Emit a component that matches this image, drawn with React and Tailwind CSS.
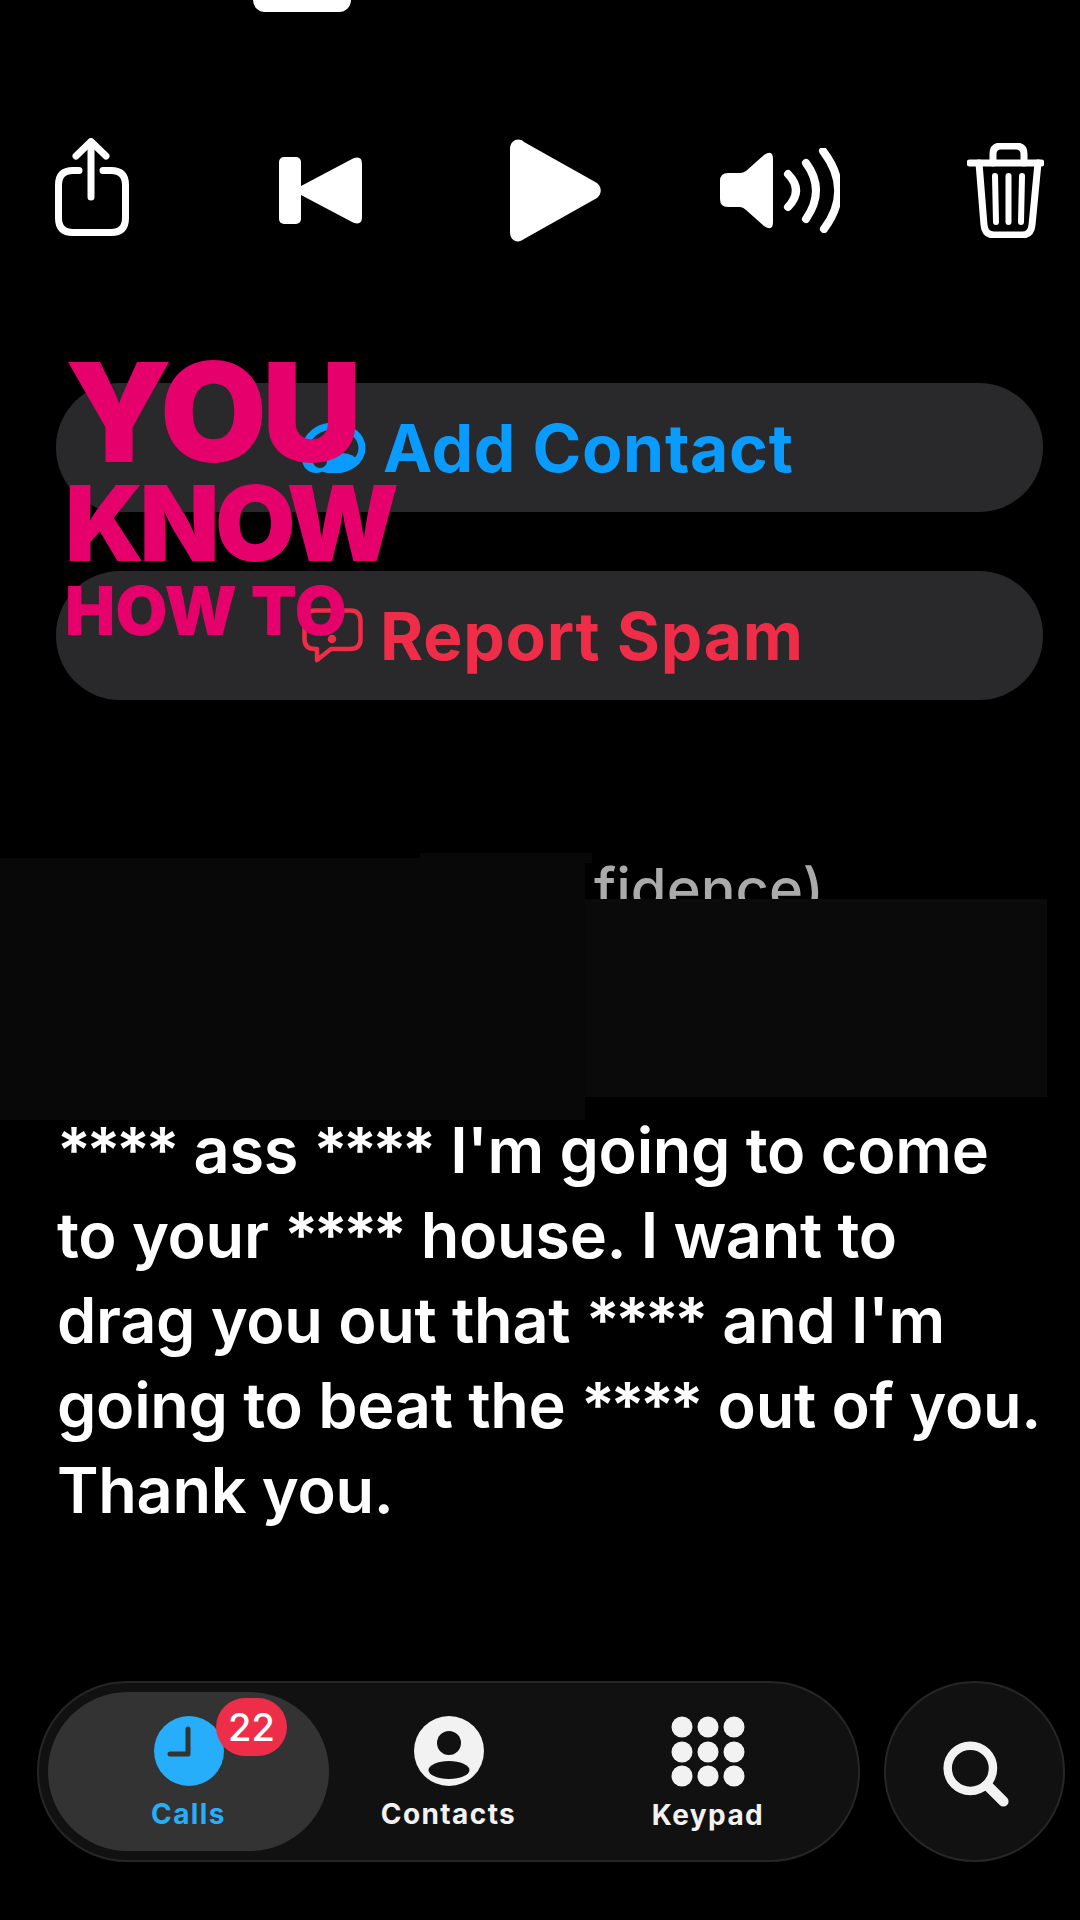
import React from "react";

const sans = "font-['Inter','Liberation_Sans',sans-serif]";

function Share() {
  return (
    <svg width="74" height="98" viewBox="0 0 74 98" fill="none" stroke="#fff" strokeWidth="7" strokeLinecap="round" strokeLinejoin="round" className="self-start">
      <path d="M24 32.5 H18 Q3.5 32.5 3.5 47 V80 Q3.5 94.5 18 94.5 H56 Q70.5 94.5 70.5 80 V47 Q70.5 32.5 56 32.5 H48" />
      <path d="M36 4 V59" />
      <path d="M21 18 L36 3.5 L51 18" />
    </svg>
  );
}

function Back() {
  return (
    <svg width="83" height="67" viewBox="0 0 83 67" fill="#fff">
      <rect x="0" y="0" width="22" height="67" rx="5" />
      <path d="M22 29 L74 1.5 Q83 -2 83 7 V60 Q83 69 74 65.5 L22 38 Z" />
    </svg>
  );
}

function Play() {
  return (
    <svg width="91" height="103" viewBox="0 0 91 103" fill="#fff">
      <path d="M0 10 C0 1 9 -2 14 3 L87 44 C92 48 92 55 87 59 L14 100 C8 105 0 102 0 93 Z" />
    </svg>
  );
}

function Speaker() {
  return (
    <svg width="120" height="85" viewBox="0 0 120 85" fill="none">
      <path fill="#fff" d="M8 25 H20 Q23 25 26 23 L44 7 Q53 1 53 11 V74 Q53 84 44 78 L26 62 Q23 59 20 59 H8 Q0 59 0 51 V33 Q0 25 8 25 Z" />
      <g stroke="#fff" strokeWidth="8" strokeLinecap="round">
        <path d="M68 26 Q84 42.5 68 59" />
        <path d="M86 15 Q106 42 86 71" />
        <path d="M103 3 Q133 42 104 81" />
      </g>
    </svg>
  );
}

function Trash() {
  return (
    <svg width="77" height="95" viewBox="0 0 77 95" fill="none" stroke="#fff" strokeWidth="7" strokeLinecap="round" strokeLinejoin="round">
      <path d="M3 20 H74" />
      <path d="M26 20 V11 Q26 3 34 3 H49 Q57 3 57 11 V20" />
      <path d="M12 20 L17 82 Q18 92 27 92 H55 Q64 92 65 82 L71 20" />
      <path d="M28 33 L29 79 M41.5 33 V79 M55 33 L54 79" strokeWidth="6" />
    </svg>
  );
}

function AddIcon() {
  return (
    <svg width="64" height="50" viewBox="0 0 64 50" fill="none">
      <ellipse cx="32" cy="25" rx="28" ry="22" stroke="#0a9bff" strokeWidth="7" />
      <path fill="#0a9bff" d="M20 46 Q26 30 40 30 Q52 30 58 40 Q48 50 30 50 Z" />
      <circle cx="14" cy="36" r="14" fill="#0a9bff" />
      <circle cx="18" cy="38" r="7" fill="#29292b" />
    </svg>
  );
}

function SpamIcon() {
  return (
    <svg width="61" height="55" viewBox="0 0 61 55" fill="none" stroke="#f02d48" strokeWidth="4.5" strokeLinejoin="round" strokeLinecap="round">
      <path d="M13 2.5 H48 Q58.5 2.5 58.5 13 V31 Q58.5 41 48 41 H29 L15 52 V41 H13 Q2.5 41 2.5 31 V13 Q2.5 2.5 13 2.5 Z" />
      <path d="M30 10 V22" />
      <circle cx="30" cy="31" r="2" fill="#f02d48" />
    </svg>
  );
}

function Clock() {
  return (
    <svg width="70" height="70" viewBox="0 0 70 70">
      <circle cx="35" cy="35" r="35" fill="#27aefb" />
      <path d="M34 13 V38 H16" fill="none" stroke="#333" strokeWidth="5" strokeLinecap="round" strokeLinejoin="round" />
    </svg>
  );
}

function Person() {
  return (
    <svg width="70" height="70" viewBox="0 0 70 70">
      <circle cx="35" cy="35" r="35" fill="#f2f2f2" />
      <circle cx="35" cy="27" r="12" fill="#111" />
      <ellipse cx="35" cy="54" rx="20.5" ry="9" fill="#111" />
    </svg>
  );
}

function Dots() {
  const xs = [11, 37, 63];
  const ys = [11, 36, 60];
  return (
    <svg width="74" height="71" viewBox="0 0 74 71" fill="#f2f2f2">
      {ys.map((y) => xs.map((x) => <circle key={x + "-" + y} cx={x} cy={y} r="10.5" />))}
    </svg>
  );
}

function Search() {
  return (
    <svg width="68" height="68" viewBox="0 0 72 72" fill="none" stroke="#f2f2f2" strokeLinecap="round">
      <circle cx="30" cy="30" r="24" strokeWidth="9" />
      <path d="M48 48 L65 65" strokeWidth="11" />
    </svg>
  );
}

function ActionButton({ icon, color, label }) {
  return (
    <div className="flex h-[129px] w-[987px] items-center gap-[17px] rounded-[64px] bg-[#29292b] pl-[246px]">
      {icon}
      <span className={"text-[66px] font-bold leading-none tracking-[0.7px] " + color}>{label}</span>
    </div>
  );
}

function Tab({ icon, label, width, color }) {
  return (
    <div className={"flex flex-col items-center pt-[24px] " + width}>
      {icon}
      <span className={"mt-[11px] text-[28px] font-bold leading-[34px] tracking-[1.4px] " + color}>{label}</span>
    </div>
  );
}

function Stars() {
  return <span className="pr-[3px] tracking-[-4.5px]">****</span>;
}

export default function App() {
  return (
    <div className={"relative flex h-[1920px] w-[1080px] flex-col overflow-hidden bg-black text-white " + sans}>
      <div className="ml-[253px] h-[12px] w-[98px] rounded-b-[30px] bg-white" />

      <div className="ml-[55px] mt-[126px] flex h-[104px] items-center">
        <Share />
        <div className="ml-[150px]"><Back /></div>
        <div className="ml-[148px]"><Play /></div>
        <div className="ml-[119px]"><Speaker /></div>
        <div className="ml-[127px]"><Trash /></div>
      </div>

      <div className="ml-[56px] mt-[141px] flex flex-col gap-[59px]">
        <ActionButton icon={<AddIcon />} color="text-[#0a9bff]" label="Add Contact" />
        <ActionButton icon={<SpamIcon />} color="text-[#f02d48]" label="Report Spam" />
      </div>

      <p className="ml-[594px] mt-[160px] text-[58px] font-medium leading-[58px] text-[#aaaaaa]">fidence)</p>

      <p className="ml-[57px] mt-[190px] w-[1020px] text-[63px] font-semibold leading-[85px] tracking-[-0.3px]">
        <span className="block"><Stars /> ass <Stars /> I'm going to come</span>
        <span className="block">to your <Stars /> house. I want to</span>
        <span className="block">drag you out that <Stars /> and I'm</span>
        <span className="block">going to beat the <Stars /> out of you.</span>
        <span className="block">Thank you.</span>
      </p>

      <div className="mb-[58px] ml-[37px] mt-auto flex items-start gap-[24px]">
        <div className="relative flex h-[181px] w-[823px] items-start rounded-[90px] border-2 border-[#262626] bg-[#111111] p-[9px]">
          <div className="relative flex h-[159px] w-[281px] justify-center rounded-[80px] bg-[#333333]">
            <Tab icon={<Clock />} label="Calls" width="w-full" color="text-[#27aefb]" />
            <div className="absolute left-[168px] top-[6px] flex h-[58px] w-[71px] items-center justify-center rounded-full bg-[#ee2d49] text-[38px] font-medium leading-none text-white">22</div>
          </div>
          <Tab icon={<Person />} label="Contacts" width="w-[239px]" color="text-[#f2f2f2]" />
          <Tab icon={<Dots />} label="Keypad" width="w-[280px]" color="text-[#f2f2f2]" />
        </div>
        <div className="flex h-[181px] w-[181px] items-center justify-center rounded-full border-2 border-[#262626] bg-[#111111] pl-[2px] pt-[4px]">
          <Search />
        </div>
      </div>

      <div className="absolute left-0 top-[858px] h-[262px] w-[585px] bg-[#080808]" />
      <div className="absolute left-[420px] top-[853px] h-[10px] w-[172px] bg-[#080808]" />
      <div className="absolute left-[585px] top-[899px] h-[198px] w-[462px] bg-[#0a0a0a]" />

      <div className="absolute left-[65px] top-[343px] flex flex-col font-black leading-none text-[#e6006b]">
        <span className="text-[138px] tracking-[-5px]">YOU</span>
        <span className="-mt-[10px] text-[104px] tracking-[-4.5px]">KNOW</span>
        <span className="mt-[2px] text-[67px] tracking-[0.2px]">HOW TO</span>
      </div>
    </div>
  );
}
